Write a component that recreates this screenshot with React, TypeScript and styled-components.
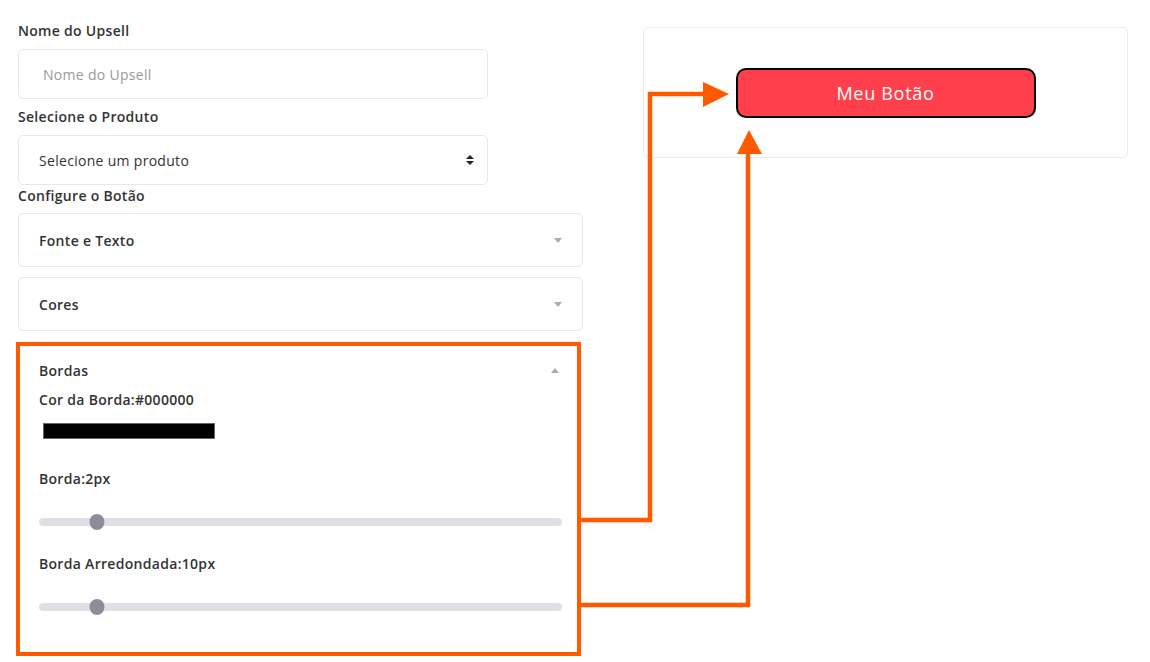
import React from 'react';
import styled, { createGlobalStyle } from 'styled-components';

const GlobalStyle = createGlobalStyle`
  body {
    margin: 0;
    background: #fff;
    font-family: 'Open Sans', 'Noto Sans', sans-serif;
    color: #333;
    letter-spacing: 0.3px;
  }
`;

const Page = styled.div`
  position: relative;
  display: flex;
  gap: 60px;
  padding: 20px 0 0 18px;
  width: 1150px;
  height: 662px;
  box-sizing: border-box;
`;

const Form = styled.div`
  width: 565px;
  display: flex;
  flex-direction: column;
`;

const Label = styled.div<{ $mt?: number }>`
  font-size: 14px;
  font-weight: 600;
  color: #333;
  line-height: 22px;
  margin-top: ${p => p.$mt ?? 0}px;
`;

const Field = styled.div<{ $mt: number }>`
  width: 470px;
  height: 50px;
  box-sizing: border-box;
  margin-top: ${p => p.$mt}px;
  border: 1px solid #e8e8e8;
  border-radius: 5px;
  display: flex;
  align-items: center;
  justify-content: space-between;
  font-size: 14px;
`;

const Placeholder = styled.span`
  padding-left: 24px;
  color: #999;
`;

const SelectText = styled.span`
  padding-left: 20px;
  color: #333;
`;

const Card = styled.div<{ $open?: boolean; $mt?: number }>`
  box-sizing: border-box;
  width: 565px;
  margin-top: ${p => p.$mt ?? (p.$open ? 11 : 10)}px;
  border: ${p => (p.$open ? '4px solid #ff5a00' : '1px solid #e8e8e8')};
  border-radius: ${p => (p.$open ? 0 : 5)}px;
  margin-left: ${p => (p.$open ? -2 : 0)}px;
`;

const CardHead = styled.div<{ $open?: boolean }>`
  height: ${p => (p.$open ? 48 : 52)}px;
  display: flex;
  align-items: center;
  justify-content: space-between;
  padding: 0 ${p => (p.$open ? 18 : 20)}px 0 ${p => (p.$open ? 19 : 20)}px;
  font-size: 14px;
  font-weight: 600;
  color: #333;
`;

const Caret = styled.span<{ $up?: boolean }>`
  width: 0;
  height: 0;
  border-left: 4px solid transparent;
  border-right: 4px solid transparent;
  ${p => (p.$up ? 'border-bottom: 5px solid #a9abb6;' : 'border-top: 5px solid #a9abb6;')}
`;

const CardBody = styled.div`
  margin-top: -4px;
  padding: 0 15px 41px 19px;
  display: flex;
  flex-direction: column;
`;

const SubLabel = styled.div<{ $mt?: number }>`
  font-size: 14px;
  font-weight: 600;
  color: #333;
  line-height: 20px;
  margin-top: ${p => p.$mt ?? 0}px;
`;

const Swatch = styled.div<{ $color: string }>`
  margin: 13px 0 0 4px;
  width: 172px;
  height: 16px;
  box-sizing: border-box;
  background: ${p => p.$color};
  border: 1px solid #666;
`;

const Track = styled.div`
  position: relative;
  margin-top: 29px;
  height: 8px;
  width: 523px;
  border-radius: 4px;
  background: #dee0e5;
`;

const Thumb = styled.div`
  position: absolute;
  top: -4px;
  width: 15px;
  height: 16px;
  border-radius: 50%;
  background: #8e8c9a;
  transform: translateX(-50%);
`;

const Preview = styled.div`
  margin-top: 7px;
  width: 485px;
  height: 131px;
  box-sizing: border-box;
  border: 1px solid #ebebeb;
  border-radius: 5px;
  display: flex;
  justify-content: center;
  padding-top: 40px;
`;

const PreviewButton = styled.button<{ $bw: number; $radius: number }>`
  width: 300px;
  height: 50px;
  box-sizing: border-box;
  background: #ff3f4b;
  border: ${p => p.$bw}px solid #000;
  border-radius: ${p => p.$radius}px;
  color: #fff;
  font-family: 'Open Sans', 'Noto Sans', sans-serif;
  font-size: 18px;
  letter-spacing: 0.7px;
`;

const Overlay = styled.svg`
  position: absolute;
  left: 0;
  top: 0;
  pointer-events: none;
`;

const UpDown = () => (
  <svg width="8" height="10" viewBox="0 0 8 10" style={{ marginRight: 13 }}>
    <path d="M4 0 L8 4 H0 Z M0 6 H8 L4 10 Z" fill="#222" />
  </svg>
);

const Slider = ({ value }: { value: number }) => (
  <Track>
    <Thumb style={{ left: `${value}px` }} />
  </Track>
);

export default function App() {
  return (
    <>
      <GlobalStyle />
      <Page>
        <Form>
          <Label>Nome do Upsell</Label>
          <Field $mt={7}>
            <Placeholder>Nome do Upsell</Placeholder>
          </Field>
          <Label $mt={7}>Selecione o Produto</Label>
          <Field $mt={7}>
            <SelectText>Selecione um produto</SelectText>
            <UpDown />
          </Field>
          <Label>Configure o Botão</Label>
          <Card $mt={6}>
            <CardHead>
              Fonte e Texto
              <Caret />
            </CardHead>
          </Card>
          <Card>
            <CardHead>
              Cores
              <Caret />
            </CardHead>
          </Card>
          <Card $open>
            <CardHead $open>
              Bordas
              <Caret $up />
            </CardHead>
            <CardBody>
              <SubLabel>Cor da Borda:#000000</SubLabel>
              <Swatch $color="#000000" />
              <SubLabel $mt={30}>Borda:2px</SubLabel>
              <Slider value={58} />
              <SubLabel $mt={28}>Borda Arredondada:10px</SubLabel>
              <Slider value={58} />
            </CardBody>
          </Card>
        </Form>
        <div>
          <Preview>
            <PreviewButton $bw={2} $radius={10}>
              Meu Botão
            </PreviewButton>
          </Preview>
        </div>
        <Overlay width="1150" height="662">
          <g fill="none" stroke="#ff5a00" strokeWidth="4.5">
            <polyline points="581,520 650,520 650,94 706,94" />
            <polyline points="581,605 748,605 748,152" />
          </g>
          <g fill="#ff5a00">
            <polygon points="703,82 729,94 703,107" />
            <polygon points="737,154 749,130 762,154" />
          </g>
        </Overlay>
      </Page>
    </>
  );
}
